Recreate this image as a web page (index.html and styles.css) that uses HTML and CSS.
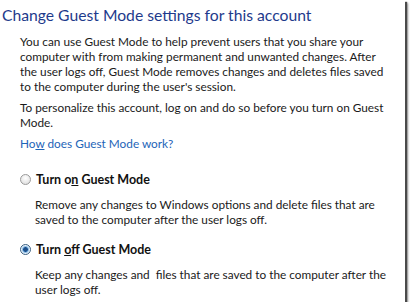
FILE: index.html
```html
<!DOCTYPE html>
<html>
<head>
<meta charset="utf-8">
<link rel="stylesheet" href="styles.css">
</head>
<body>
<div class="panel">
  <h1 class="title">Change Guest Mode settings for this account</h1>
  <div class="content">
    <p class="para lines">You can use Guest Mode to help prevent users that you share your<br>computer with from making permanent and unwanted changes. After<br>the user logs off, Guest Mode removes changes and deletes files saved<br>to the computer during the user's session.</p>
    <p class="para">To personalize this account, log on and do so before you turn on Guest Mode.</p>
    <a class="link" href="#">Ho<u>w</u> does Guest Mode work?</a>
    <div class="option">
      <div class="opt-head">
        <span class="radio"></span>
        <span class="opt-label">Turn o<u>n</u> Guest Mode</span>
      </div>
      <p class="opt-desc">Remove any changes to Windows options and delete files that are saved to the computer after the user logs off.</p>
    </div>
    <div class="option">
      <div class="opt-head">
        <span class="radio checked"></span>
        <span class="opt-label">Turn <u>o</u>ff Guest Mode</span>
      </div>
      <p class="opt-desc">Keep any changes and&nbsp; files that are saved to the computer after the user logs off.</p>
    </div>
  </div>
</div>
</body>
</html>
```
FILE: styles.css
```css
html, body {
  margin: 0;
  padding: 0;
  background: #ffffff;
}
body {
  font-family: "Lato", "Open Sans", sans-serif;
  color: #1a1a1a;
}
.panel {
  width: 405px;
  height: 302px;
  background: #ffffff;
  box-shadow: 2px 2px 1px #4a4a4a, 3px 3px 2px #999;
  overflow: hidden;
  box-sizing: border-box;
  padding: 5px 0 0 2px;
}
.title {
  margin: 0;
  font-weight: normal;
  font-size: 15.7px;
  line-height: 20px;
  color: #1e3a8c;
}
.content {
  padding-left: 18px;
  padding-top: 9px;
  font-size: 11.8px;
  line-height: 15px;
  width: 380px;
}
.para {
  margin: 0 0 6px 0;
}
.lines {
  white-space: nowrap;
}
.link {
  display: block;
  color: #1d64b8;
  text-decoration: none;
  margin-top: 0;
}
.link u {
  text-decoration: underline;
}
.option {
  margin-top: 21px;
}
.option + .option {
  margin-top: 15px;
}
.opt-head {
  display: flex;
  align-items: center;
  gap: 5px;
}
.radio {
  width: 11px;
  height: 11px;
  border-radius: 50%;
  border: 1px solid #9a9a9a;
  background: radial-gradient(circle at 50% 35%, #ffffff, #d8d8d8);
  box-sizing: border-box;
}
.radio.checked {
  border-color: #3a5f80;
  background: radial-gradient(circle, #1e4f8a 0 2px, #5fa0d8 2.5px, #e8f2fb 4px);
}
.opt-label {
  font-weight: bold;
  font-size: 12.5px;
  color: #111;
}
.opt-desc {
  margin: 10px 0 0 15px;
}
```
